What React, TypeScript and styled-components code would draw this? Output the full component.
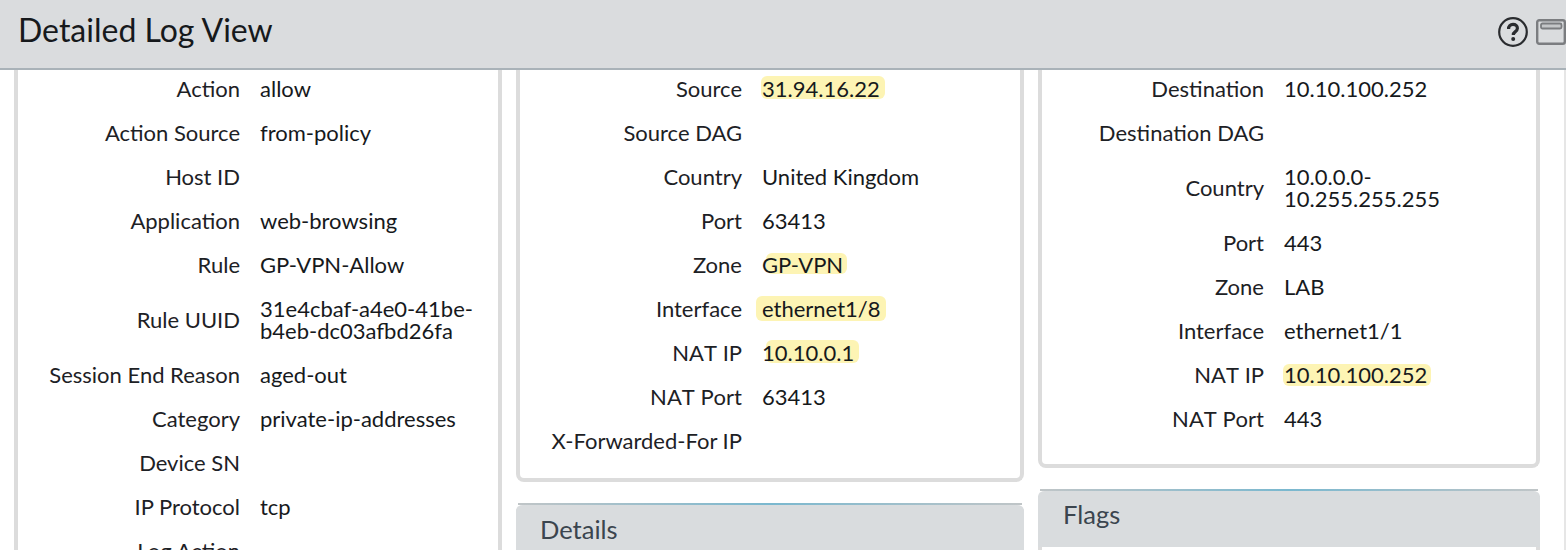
import React from "react";
import styled, { createGlobalStyle } from "styled-components";

const GlobalStyle = createGlobalStyle`
  html, body {
    margin: 0;
    padding: 0;
    background: #fff;
    overflow: hidden;
  }
  body {
    font-family: Lato, "Open Sans", sans-serif;
    color: #111;
  }
`;

const Page = styled.div`
  width: 1566px;
  height: 550px;
  overflow: hidden;
  display: flex;
  flex-direction: column;
`;

const Header = styled.header`
  height: 68px;
  flex: none;
  background: #dadcde;
  border-bottom: 2px solid #a9b2b8;
  display: flex;
  align-items: center;
  justify-content: space-between;
  padding-left: 18px;
  position: relative;
  z-index: 2;
`;

const Title = styled.h1`
  margin: 0 0 9px;
  font-size: 32px;
  font-weight: 400;
  line-height: 40px;
  color: #16191c;
`;

const HeaderTools = styled.div`
  display: flex;
  align-items: center;
  gap: 7px;
  margin-top: -4px;
`;

const Body = styled.div`
  flex: 1;
  min-height: 0;
  border-right: 2px solid #e6e6e6;
`;

const Columns = styled.main`
  margin: -3px 0 0 14px;
  display: grid;
  grid-template-columns: 488px 508px 502px;
  column-gap: 14px;
  align-items: start;
`;

const Stack = styled.section`
  display: flex;
  flex-direction: column;
  gap: 21px;
`;

const Card = styled.div<{ $height: number; $open?: boolean }>`
  box-sizing: border-box;
  height: ${(p) => p.$height}px;
  background: #fff;
  border: solid #dcdcdc;
  border-width: ${(p) => (p.$open ? "0 4px" : "0 4px 4px")};
  border-radius: ${(p) => (p.$open ? "0" : "0 0 8px 8px")};
`;

const Row = styled.div<{ $tall?: boolean }>`
  display: grid;
  grid-template-columns: 222px 1fr;
  column-gap: 20px;
  align-items: center;
  min-height: ${(p) => (p.$tall ? 66 : 44)}px;
  font-size: 22px;
  line-height: 22px;
`;

const Label = styled.div<{ $unkerned?: boolean }>`
  text-align: right;
  white-space: nowrap;
  color: #1d2125;
  font-kerning: ${(p) => (p.$unkerned ? "none" : "auto")};
`;

const Value = styled.div<{ $maxWidth: number }>`
  max-width: ${(p) => p.$maxWidth}px;
  color: #16191c;
`;

// the highlights in the reference are painted by hand, they don't follow the text box
const Mark = styled.span<{ $left: number; $width: number; $top: number; $height: number }>`
  position: relative;
  display: inline-block;
  z-index: 0;

  &::before {
    content: "";
    position: absolute;
    z-index: -1;
    left: ${(p) => p.$left}px;
    width: ${(p) => p.$width}px;
    top: ${(p) => p.$top}px;
    height: ${(p) => p.$height}px;
    background: #fdf4b4;
    border-radius: 6px;
  }
`;

const SectionBar = styled.div<{ $height: number; $textTop: number; $textLeft: number }>`
  box-sizing: border-box;
  height: ${(p) => p.$height}px;
  background: #d9dcde;
  background-clip: padding-box;
  border-radius: 7px 7px 0 0;
  border-top: 2px solid transparent;
  position: relative;
  padding: ${(p) => p.$textTop}px 0 0 ${(p) => p.$textLeft}px;
  font-size: 25.5px;
  line-height: 32px;
  color: #3b454e;

  &::before {
    content: "";
    position: absolute;
    top: -2px;
    left: 2px;
    right: 2px;
    height: 2px;
    background: linear-gradient(to right, #c0c5c7, #7ab8cf 50%, #c0c5c7);
  }
`;

const FlagsBody = styled.div`
  height: 20px;
  border: solid #dcdcdc;
  border-width: 0 4px;
  background: #fff;
`;

type Highlight = { left: number; width: number; top: number; height: number };
type Item = { label: string; value?: string; mark?: Highlight; tall?: boolean; unkerned?: boolean };

const actionRows: Item[] = [
  { label: "Action", value: "allow" },
  { label: "Action Source", value: "from-policy" },
  { label: "Host ID" },
  { label: "Application", value: "web-browsing" },
  { label: "Rule", value: "GP-VPN-Allow" },
  { label: "Rule UUID", value: "31e4cbaf-a4e0-41be-b4eb-dc03afbd26fa", tall: true },
  { label: "Session End Reason", value: "aged-out" },
  { label: "Category", value: "private-ip-addresses" },
  { label: "Device SN" },
  { label: "IP Protocol", value: "tcp" },
  { label: "Log Action" },
];

const sourceRows: Item[] = [
  { label: "Source", value: "31.94.16.22", mark: { left: -1, width: 124, top: -2, height: 23 } },
  { label: "Source DAG" },
  { label: "Country", value: "United Kingdom" },
  { label: "Port", value: "63413" },
  { label: "Zone", value: "GP-VPN", mark: { left: 4, width: 81, top: -1, height: 21 } },
  { label: "Interface", value: "ethernet1/8", mark: { left: -6, width: 130, top: -2, height: 25 } },
  { label: "NAT IP", value: "10.10.0.1", unkerned: true, mark: { left: 4, width: 93, top: -2, height: 23 } },
  { label: "NAT Port", value: "63413", unkerned: true },
  { label: "X-Forwarded-For IP" },
];

const destinationRows: Item[] = [
  { label: "Destination", value: "10.10.100.252" },
  { label: "Destination DAG" },
  { label: "Country", value: "10.0.0.0-10.255.255.255", tall: true },
  { label: "Port", value: "443" },
  { label: "Zone", value: "LAB" },
  { label: "Interface", value: "ethernet1/1" },
  { label: "NAT IP", value: "10.10.100.252", unkerned: true, mark: { left: -1, width: 148, top: 0, height: 22 } },
  { label: "NAT Port", value: "443", unkerned: true },
];

function Rows({ items, maxWidth }: { items: Item[]; maxWidth: number }) {
  return (
    <>
      {items.map((item) => (
        <Row key={item.label} $tall={item.tall}>
          <Label $unkerned={item.unkerned}>{item.label}</Label>
          <Value $maxWidth={maxWidth}>
            {item.mark ? (
              <Mark
                $left={item.mark.left}
                $width={item.mark.width}
                $top={item.mark.top}
                $height={item.mark.height}
              >
                {item.value}
              </Mark>
            ) : (
              item.value
            )}
          </Value>
        </Row>
      ))}
    </>
  );
}

function HelpIcon() {
  return (
    <svg width="32" height="32" viewBox="0 0 32 32" fill="none">
      <circle cx="16" cy="16" r="13.8" stroke="#2a2c2f" strokeWidth="2.2" />
      <path
        d="M11.6 13c-.2-2.8 1.8-4.6 4.4-4.6s4.4 1.6 4.4 3.8c0 1.9-1.1 2.8-2.3 3.7-1.1 .8-1.8 1.5-1.8 3.2"
        stroke="#2a2c2f"
        strokeWidth="3.2"
      />
      <circle cx="16.2" cy="22.9" r="2" fill="#2a2c2f" />
    </svg>
  );
}

function WindowIcon() {
  return (
    <svg width="30" height="28" viewBox="0 0 30 28" fill="none">
      <rect x="1.2" y="2.2" width="27.6" height="23.6" rx="2" stroke="#7b7d80" strokeWidth="2.4" />
      <rect x="5" y="5.5" width="20.5" height="5" rx="1.5" fill="#c4c6c8" stroke="#7b7d80" strokeWidth="1.8" />
    </svg>
  );
}

export default function App() {
  return (
    <Page>
      <GlobalStyle />
      <Header>
        <Title>Detailed Log View</Title>
        <HeaderTools>
          <HelpIcon />
          <WindowIcon />
        </HeaderTools>
      </Header>
      <Body>
        <Columns>
          <Stack>
            <Card $height={520} $open>
              <Rows items={actionRows} maxWidth={225} />
            </Card>
          </Stack>
          <Stack>
            <Card $height={415}>
              <Rows items={sourceRows} maxWidth={240} />
            </Card>
            <SectionBar $height={60} $textTop={8} $textLeft={24}>
              Details
            </SectionBar>
          </Stack>
          <Stack>
            <Card $height={401}>
              <Rows items={destinationRows} maxWidth={190} />
            </Card>
            <div>
              <SectionBar $height={58} $textTop={7} $textLeft={25}>
                Flags
              </SectionBar>
              <FlagsBody />
            </div>
          </Stack>
        </Columns>
      </Body>
    </Page>
  );
}
